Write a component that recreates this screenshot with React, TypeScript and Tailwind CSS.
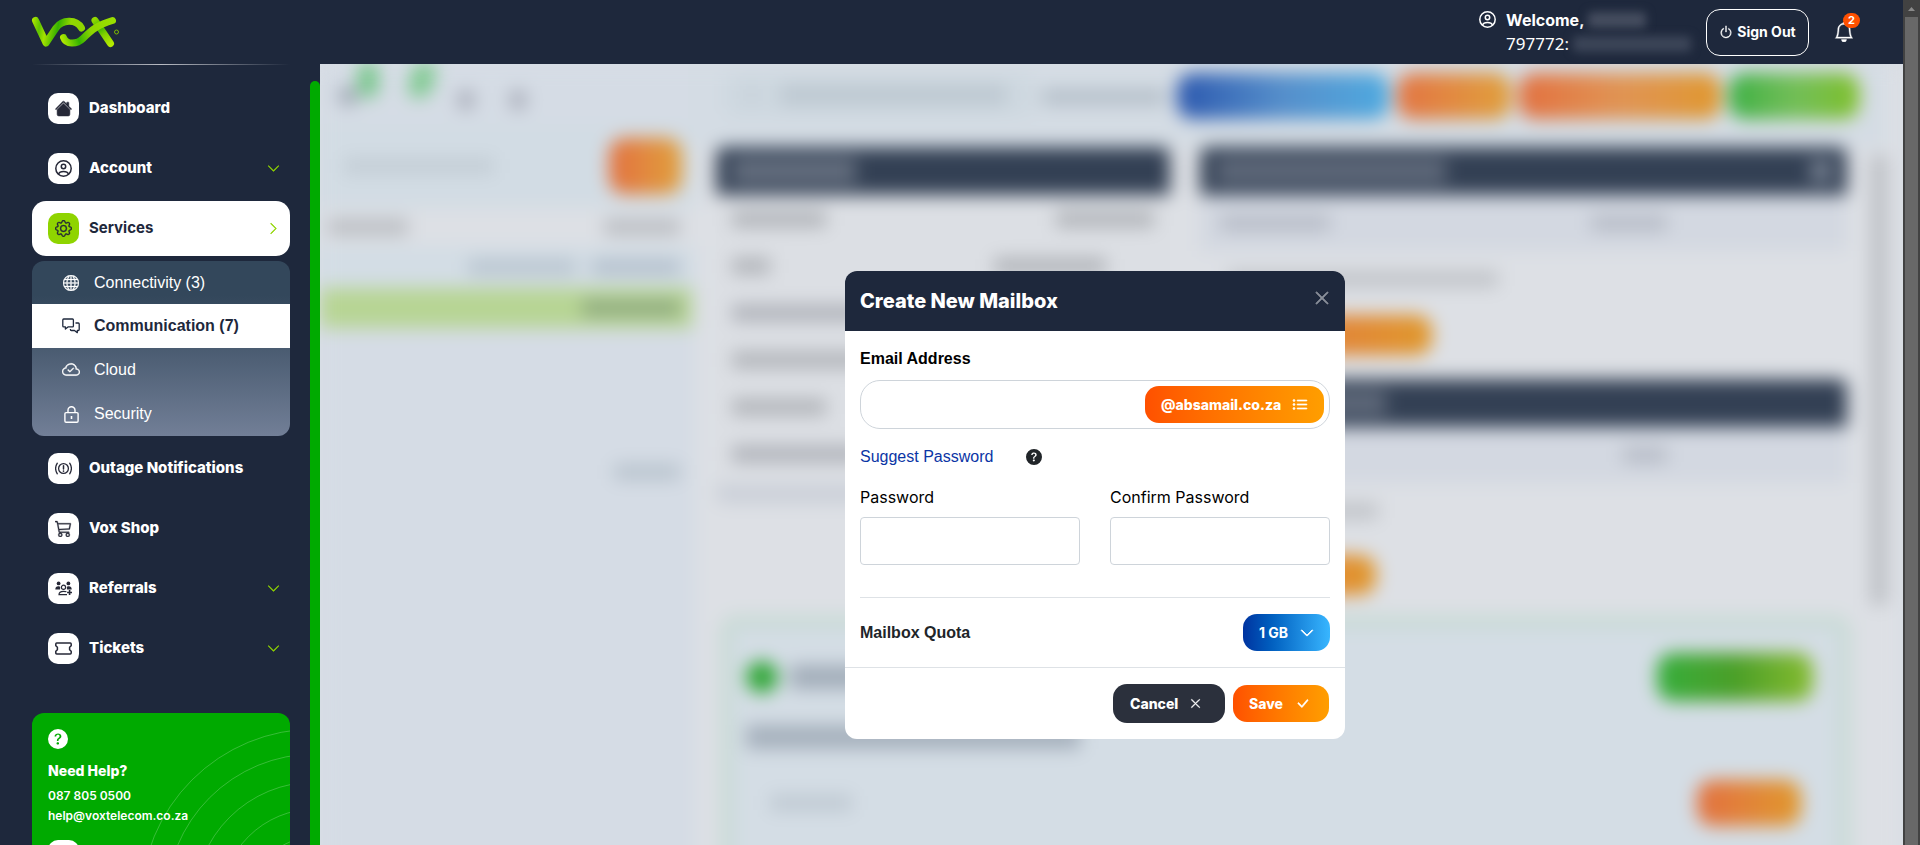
import type { ReactNode } from "react";
import {
  BsBell,
  BsCart3,
  BsCheckLg,
  BsChevronDown,
  BsChevronRight,
  BsCloudCheck,
  BsGear,
  BsGlobe,
  BsHouseFill,
  BsListUl,
  BsPower,
  BsQuestionCircleFill,
  BsXLg,
} from "react-icons/bs";

function VoxLogo() {
  return (
    <svg width="90" height="34" viewBox="30 16 90 34" fill="none" role="img" aria-label="Vox">
      <defs>
        <linearGradient id="vox-a" gradientUnits="userSpaceOnUse" x1="32" y1="20" x2="85" y2="30">
          <stop offset="0" stopColor="#b4ea00" />
          <stop offset="0.16" stopColor="#5fc400" />
          <stop offset="0.28" stopColor="#a4e200" />
          <stop offset="0.5" stopColor="#35b000" />
          <stop offset="0.72" stopColor="#93d800" />
          <stop offset="1" stopColor="#8fd600" />
        </linearGradient>
        <linearGradient id="vox-b" gradientUnits="userSpaceOnUse" x1="60" y1="42" x2="116" y2="22">
          <stop offset="0" stopColor="#c0f000" />
          <stop offset="0.3" stopColor="#35b400" />
          <stop offset="0.55" stopColor="#8ed600" />
          <stop offset="1" stopColor="#9be000" />
        </linearGradient>
        <linearGradient id="vox-c" gradientUnits="userSpaceOnUse" x1="95" y1="20" x2="111" y2="45">
          <stop offset="0" stopColor="#93d800" />
          <stop offset="0.35" stopColor="#3db600" />
          <stop offset="0.6" stopColor="#7fd000" />
          <stop offset="1" stopColor="#b4ea00" />
        </linearGradient>
      </defs>
      <g strokeWidth="7" strokeLinecap="round" strokeLinejoin="round">
        <path d="M95 21.500 L110.500 44.500" stroke="url(#vox-c)" />
        <path d="M35.500 21.500 L46 44 L56 29 C62 20.500 76 19.500 81.500 29" stroke="url(#vox-a)" />
        <path d="M63.500 38.500 C66 46 77 45.500 83 39.500 C92 30.500 98 26 112.500 21.500" stroke="url(#vox-b)" />
      </g>
      <circle cx="116.500" cy="33" r="2" stroke="#7cb800" strokeWidth="1" />
    </svg>
  );
}

function AccountIcon({ className }: { className?: string }) {
  return (
    <svg viewBox="0 0 17 17" className={className} fill="none" stroke="currentColor" strokeWidth="1.500">
      <circle cx="8.500" cy="8.500" r="7.700" />
      <circle cx="8.500" cy="6.500" r="2.200" />
      <path d="M3.500 14.200 C4.300 12 5.800 11.600 8.500 11.600 S12.700 12 13.500 14.200" />
    </svg>
  );
}

function ChatIcon() {
  return (
    <svg width="18" height="16" viewBox="0 0 18 16" fill="none" stroke="currentColor" strokeWidth="1.300" strokeLinejoin="round">
      <path d="M1.700 1 H10.500 Q11.400 1 11.400 1.900 V8 Q11.400 8.900 10.500 8.900 H6 L3.400 11 V8.900 H1.700 Q0.800 8.900 0.800 8 V1.900 Q0.800 1 1.700 1 Z" />
      <path d="M13.500 5 H16.300 Q17.200 5 17.200 5.900 V11.600 Q17.200 12.500 16.300 12.500 H15.300 V14.700 L12.500 12.500 H9.300 Q8.400 12.500 8.400 11.600 V11" />
    </svg>
  );
}

function LockIcon() {
  return (
    <svg width="15" height="17" viewBox="0 0 15 17" fill="none" stroke="currentColor" strokeWidth="1.400">
      <rect x="0.900" y="6.600" width="13.200" height="9.600" rx="1.200" />
      <path d="M4 6.600 V4.200 a3.500 3.500 0 0 1 7 0 V6.600" />
      <path d="M7.500 10 V13" strokeWidth="1.600" />
    </svg>
  );
}

function OutageIcon() {
  return (
    <svg width="17" height="13" viewBox="0 0 17 13" fill="none" stroke="currentColor" strokeWidth="1.300" strokeLinecap="round">
      <circle cx="8.500" cy="6.500" r="4.900" />
      <path d="M8.500 3.800 V6.900" strokeWidth="1.500" />
      <path d="M8.500 9.100 V9.200" strokeWidth="1.600" />
      <path d="M2.300 1.200 C0.300 4.300 0.300 8.700 2.300 11.800" />
      <path d="M14.700 1.200 C16.700 4.300 16.700 8.700 14.700 11.800" />
    </svg>
  );
}

function ReferralsIcon() {
  return (
    <svg width="17" height="15" viewBox="0 0 17 15" fill="currentColor">
      <circle cx="3.600" cy="2.400" r="1.900" />
      <circle cx="13.400" cy="2.400" r="1.900" />
      <path d="M0.300 8.600 C0.300 6 1.500 5.200 3.200 5.200 C4.400 5.200 5 5.600 5.200 6.200 L5 8.600 Z" />
      <path d="M16.700 8.600 C16.700 6 15.500 5.200 13.800 5.200 C12.600 5.200 12 5.600 11.800 6.200 L12 8.600 Z" />
      <circle cx="8.500" cy="6.300" r="2.100" fill="none" stroke="currentColor" strokeWidth="1.200" />
      <path d="M12 13.700 H4 C4 11 5.500 10.300 8.500 10.300 C9.700 10.300 10.700 10.400 11.400 10.800" fill="none" stroke="currentColor" strokeWidth="1.200" />
      <path d="M14.600 9 V14 M12.100 11.500 H17" stroke="currentColor" strokeWidth="1.600" />
    </svg>
  );
}

function TicketIcon() {
  return (
    <svg width="17" height="13" viewBox="0 0 17 13" fill="none" stroke="currentColor" strokeWidth="1.500" strokeLinejoin="round">
      <path d="M1.700 1 H15.300 Q16.200 1 16.200 1.900 V3.800 L14.600 5.300 V7.700 L16.200 9.200 V11.100 Q16.200 12 15.300 12 H1.700 Q0.800 12 0.800 11.100 V9.200 L2.400 7.700 V5.300 L0.800 3.800 V1.900 Q0.800 1 1.700 1 Z" />
    </svg>
  );
}

interface NavItemProps {
  icon: ReactNode;
  label: string;
  expandable?: boolean;
  active?: boolean;
}

function NavItem({ icon, label, expandable, active }: NavItemProps) {
  return (
    <a
      href="#"
      className={
        active
          ? "flex h-[55px] items-center gap-[10px] rounded-[14px] bg-white pr-[10px] pl-4 text-[#1e283c]"
          : "flex h-[55px] items-center gap-[10px] pr-[10px] pl-4 text-white"
      }
    >
      <span
        className={
          active
            ? "flex size-[31px] items-center justify-center rounded-[10px] bg-[#8fd400] text-[#262837]"
            : "flex size-[31px] items-center justify-center rounded-[10px] bg-white text-[#262837]"
        }
      >
        {icon}
      </span>
      <span className={active ? "flex-1 text-[15px] font-bold" : "flex-1 text-[15px] font-extrabold"}>{label}</span>
      {expandable && <BsChevronDown className="size-[13px] stroke-[0.7] text-[#8fd400]" />}
      {active && <BsChevronRight className="size-[13px] stroke-[0.7] text-[#8fd400]" />}
    </a>
  );
}

function SubItem({ icon, label, active }: NavItemProps) {
  return (
    <a
      href="#"
      className={
        active
          ? "flex items-center bg-white pl-[30px] font-['Liberation_Sans',sans-serif] text-base font-bold text-[#1e283c]"
          : "flex items-center pl-[30px] font-['Liberation_Sans',sans-serif] text-base text-white"
      }
    >
      <span className="mr-[14px] flex w-[18px] justify-center">{icon}</span>
      {label}
    </a>
  );
}

function Sidebar() {
  return (
    <aside className="w-[310px] shrink-0 overflow-hidden pr-5 pl-8">
      <div className="h-px bg-linear-to-r from-transparent via-[#b9bcc4] to-transparent" />
      <nav aria-label="Main" className="mt-4 flex flex-col gap-[5px]">
        <NavItem icon={<BsHouseFill className="size-[17px] stroke-[0.5]" />} label="Dashboard" />
        <NavItem icon={<AccountIcon className="size-[17px]" />} label="Account" expandable />
        <NavItem icon={<BsGear className="size-[17px] stroke-[0.3]" />} label="Services" active />
        <div className="grid grid-rows-[43px_44px_44px_44px] overflow-hidden rounded-xl bg-linear-to-b from-[#33475b] from-20% to-[#727f97]">
          <SubItem icon={<BsGlobe className="size-4 stroke-[0.3]" />} label="Connectivity (3)" />
          <SubItem icon={<ChatIcon />} label="Communication (7)" active />
          <SubItem icon={<BsCloudCheck className="size-[18px] stroke-[0.3]" />} label="Cloud" />
          <SubItem icon={<LockIcon />} label="Security" />
        </div>
        <NavItem icon={<OutageIcon />} label="Outage Notifications" />
        <NavItem icon={<BsCart3 className="size-[17px] stroke-[0.3]" />} label="Vox Shop" />
        <NavItem icon={<ReferralsIcon />} label="Referrals" expandable />
        <NavItem icon={<TicketIcon />} label="Tickets" expandable />
      </nav>
      <section className="relative mt-[37px] h-[260px] overflow-hidden rounded-xl bg-[#00aa00] p-4 text-white">
        <svg className="absolute top-0 right-0" width="160" height="260" viewBox="0 0 160 260" fill="none" stroke="#ffffff" strokeOpacity="0.220">
          <circle cx="185" cy="190" r="174" />
          <circle cx="185" cy="190" r="149" />
          <circle cx="185" cy="190" r="121" />
          <circle cx="185" cy="190" r="94" />
          <circle cx="185" cy="190" r="66" />
        </svg>
        <div className="relative">
          <BsQuestionCircleFill className="size-5" />
          <h2 className="mt-3 text-sm leading-5 font-extrabold">Need Help?</h2>
          <p className="mt-[5px] text-xs leading-5 font-semibold">087 805 0500</p>
          <p className="text-xs leading-5 font-semibold">
            <a href="mailto:help@voxtelecom.co.za">help@voxtelecom.co.za</a>
          </p>
          <div className="mt-[14px] size-[31px] rounded-[10px] bg-white" />
        </div>
      </section>
    </aside>
  );
}

function Header() {
  return (
    <header className="flex h-16 shrink-0 items-center pr-12 pl-[30px] text-white">
      <VoxLogo />
      <div className="ml-auto flex items-start">
        <AccountIcon className="mt-[3px] size-[17px]" />
        <div className="ml-[10px]">
          <div className="flex h-6 items-center text-base font-bold">
            Welcome,
            <span className="ml-1 h-4 w-[58px] rounded bg-[#454d5f] blur-[5px]" />
          </div>
          <div className="flex h-6 items-center font-['Noto_Sans',sans-serif] text-[17px]">
            797772:
            <span className="ml-1 h-4 w-[118px] rounded bg-[#3c4558] blur-[5px]" />
          </div>
        </div>
      </div>
      <button type="button" className="ml-[15px] flex h-[47px] w-[103px] items-center justify-center gap-1 rounded-[14px] border border-white text-sm font-bold">
        <BsPower className="size-[14px] stroke-[0.5]" />
        Sign Out
      </button>
      <button type="button" aria-label="Notifications" className="relative ml-6 p-px">
        <BsBell className="size-5 stroke-[0.3]" />
        <span className="absolute -top-[8px] left-[10px] flex h-[15px] w-[17px] items-center justify-center rounded-full bg-[#ff5000] text-[11px] font-bold">
          2
        </span>
      </button>
    </header>
  );
}

const HEADER_BAR = "flex h-[48px] items-center rounded-t-lg bg-[#334054] px-4";

function DetailRow({ label, value }: { label: string; value?: string }) {
  return (
    <div className="flex h-[47px] items-center justify-between px-4">
      <span className={label} />
      {value && <span className={value} />}
    </div>
  );
}

function Backdrop() {
  return (
    <div aria-hidden="true" className="flex min-h-[800px] blur-[9px]">
      <div className="w-[376px] shrink-0 bg-[#d5dce5]">
        <div className="flex h-[60px] items-start pt-[22px] pl-[18px]">
          <span className="size-5 rounded-full bg-[#a0a8b4]" />
          <span className="-mt-6 h-9 w-5 rounded-full bg-[#74c687]" />
          <span className="-mt-6 ml-8 h-9 w-6 -skew-x-12 rounded-full bg-[#7fca90]" />
          <span className="mt-1 ml-6 h-5 w-4 rounded-full bg-[#a6aab6]" />
          <span className="mt-1 ml-9 h-5 w-4 rounded-full bg-[#a6aab6]" />
        </div>
        <div className="flex h-[84px] items-center justify-between bg-[#d2dce4] pr-[14px] pl-6">
          <span className="h-4 w-[150px] bg-[#c3cdd5]" />
          <span className="h-[56px] w-[73px] rounded-2xl bg-linear-to-r from-[#e27040] to-[#e0a03c]" />
        </div>
        <div className="flex h-[38px] items-center justify-between bg-[#dde0e5] pr-4 pl-2">
          <span className="h-4 w-[80px] bg-[#babdc2]" />
          <span className="h-4 w-[76px] bg-[#babdc2]" />
        </div>
        <div className="flex h-[42px] items-center justify-end gap-4 bg-[#d3dde5] pr-4">
          <span className="h-4 w-[108px] bg-[#b9c5d0]" />
          <span className="h-4 w-[88px] bg-[#b4c0cd]" />
        </div>
        <div className="mr-1 flex h-[40px] items-center justify-end bg-[#b7d594] pr-3">
          <span className="h-4 w-[98px] bg-[#8faa80]" />
        </div>
        <div className="mt-[136px] flex justify-end pr-4">
          <span className="h-4 w-[66px] bg-[#b9c4ce]" />
        </div>
      </div>
      <div className="flex min-w-0 flex-1 flex-col bg-[#dde0e5] pr-4">
        <div className="-ml-2 flex h-[83px] items-start bg-[#d4dce4] pt-[9px] pr-7">
          <div className="ml-9 flex h-11 w-[310px] items-center gap-6 rounded-xl bg-[#ced8e0] pl-6">
            <span className="h-4 w-2 bg-[#c2ccd5]" />
            <span className="h-5 w-[226px] bg-[#bdc8d1]" />
          </div>
          <span className="mt-4 mr-3 ml-2 h-4 flex-1 bg-[#b5bfc9]" />
          <span className="h-[46px] w-[212px] rounded-2xl bg-linear-to-r from-[#2d58ae] via-[#568fcb] to-[#4eaae0]" />
          <span className="ml-2 h-[46px] w-[114px] rounded-2xl bg-linear-to-r from-[#e27444] to-[#e0a03c]" />
          <span className="ml-2 h-[46px] w-[202px] rounded-2xl bg-linear-to-r from-[#e27040] via-[#e09454] to-[#e0982c]" />
          <span className="ml-2 h-[46px] w-[130px] rounded-2xl bg-linear-to-r from-[#38b044] via-[#72be58] to-[#7fc024]" />
        </div>
        <div className="flex pl-5">
          <div className="h-[356px] w-[454px] shrink-0 rounded-lg bg-[#dcdfe4]">
            <div className={HEADER_BAR}>
              <span className="h-6 w-[124px] bg-[#667080]" />
            </div>
            <DetailRow label="h-4 w-[94px] bg-[#b0b3b8]" value="h-4 w-[98px] bg-[#b0b3b8]" />
            <DetailRow label="h-4 w-[38px] bg-[#b0b3b8]" value="mr-12 h-4 w-[112px] bg-[#b0b3b8]" />
            <DetailRow label="h-4 w-[130px] bg-[#aeb1b8]" />
            <DetailRow label="h-4 w-[140px] bg-[#b0b3b8]" />
            <DetailRow label="h-4 w-[94px] bg-[#b0b3b8]" />
            <DetailRow label="h-4 w-[130px] bg-[#aeb1b8]" />
            <div className="mt-2 h-[18px] rounded-b-lg bg-[#cacfd8]" />
          </div>
          <div className="ml-[30px] flex-1">
            <div className={HEADER_BAR}>
              <span className="h-6 w-[230px] bg-[#606a7b]" />
              <span className="ml-auto size-5 bg-[#7d8797]" />
            </div>
            <div className="flex h-[56px] items-center bg-[#d3d8e1] px-5">
              <span className="h-4 w-[110px] bg-[#b7bcc7]" />
              <span className="mr-40 ml-auto h-4 w-[76px] bg-[#b7bcc7]" />
            </div>
            <div className="flex h-[128px] flex-col gap-7 pt-5 pl-7">
              <span className="h-4 w-[270px] bg-[#c0c3c8]" />
              <span className="h-10 w-[204px] rounded-2xl bg-linear-to-r from-[#e27040] to-[#e0982c]" />
            </div>
            <div className={HEADER_BAR}>
              <span className="h-6 w-[170px] bg-[#606a7b]" />
            </div>
            <div className="flex h-[56px] items-center bg-[#d3d8e1] px-5">
              <span className="mr-40 ml-auto h-4 w-[44px] bg-[#b7bcc7]" />
            </div>
            <div className="flex h-[132px] flex-col gap-9 pt-5 pl-7">
              <span className="h-4 w-[150px] bg-[#c0c3c8]" />
              <span className="h-10 w-[148px] rounded-2xl bg-linear-to-r from-[#e27040] to-[#e0982c]" />
            </div>
          </div>
          <span className="mt-2 ml-6 h-[450px] w-4 bg-[#bcbfc4]" />
        </div>
        <div className="mr-9 ml-6 min-h-[260px] flex-1 rounded-2xl border-[14px] border-[#c9dbd6] bg-[#d4dde5] pt-6 pr-6 pl-3">
          <div className="flex items-center gap-3">
            <span className="size-8 rounded-full bg-[#2fa636]" />
            <span className="h-6 w-[100px] bg-[#a2adb9]" />
            <span className="ml-auto h-[48px] w-[156px] rounded-2xl bg-linear-to-r from-[#34ae3c] via-[#4a9f28] to-[#86bc30]" />
          </div>
          <div className="mt-6 h-6 w-[334px] bg-[#a5b0bc]" />
          <div className="mt-6 flex h-[60px] items-center justify-between pr-3 pl-6">
            <span className="h-4 w-[82px] bg-[#bfc9d2]" />
            <span className="h-[46px] w-[104px] rounded-2xl bg-linear-to-r from-[#e27040] to-[#e0982c]" />
          </div>
        </div>
      </div>
    </div>
  );
}

const PASSWORD_INPUT = "mt-2 h-12 w-full rounded border border-[#ced4da] bg-white px-3 text-base";

function MailboxDialog() {
  return (
    <form role="dialog" aria-labelledby="dialog-title" className="w-[500px] overflow-hidden rounded-xl bg-white text-[#212529]">
      <div className="flex h-[60px] items-center justify-between bg-[#1e283c] px-[15px] text-white">
        <h1 id="dialog-title" className="text-xl font-extrabold">
          Create New Mailbox
        </h1>
        <button type="button" aria-label="Close" className="mb-[6px] text-[#8f949e]">
          <BsXLg className="size-4 stroke-1" />
        </button>
      </div>
      <div className="px-[15px] pt-4">
        <label htmlFor="email" className="block font-['Liberation_Sans',sans-serif] text-base font-bold text-black">
          Email Address
        </label>
        <div className="mt-[9px] flex h-[49px] items-center rounded-[20px] border border-[#ced4da] pr-[5px]">
          <input id="email" type="text" className="h-full min-w-0 flex-1 rounded-[20px] px-4 text-base outline-none" />
          <button
            type="button"
            aria-haspopup="listbox"
            className="flex h-[37px] w-[179px] items-center justify-between rounded-[14px] bg-linear-to-r from-[#ff5000] to-[#ff9e00] px-4 text-sm font-extrabold text-white"
          >
            @absamail.co.za
            <BsListUl className="size-4 stroke-[0.7]" />
          </button>
        </div>
        <div className="mt-4 flex h-6 items-center">
          <a href="#" className="font-['Liberation_Sans',sans-serif] text-base text-[#0b35a5]">
            Suggest Password
          </a>
          <BsQuestionCircleFill className="ml-[33px] size-4" />
        </div>
        <div className="mt-4 grid grid-cols-2 gap-[30px] text-black">
          <div>
            <label htmlFor="password" className="block text-base leading-6">
              Password
            </label>
            <input id="password" type="password" className={PASSWORD_INPUT} />
          </div>
          <div>
            <label htmlFor="confirm" className="block text-base leading-6">
              Confirm Password
            </label>
            <input id="confirm" type="password" className={PASSWORD_INPUT} />
          </div>
        </div>
        <div className="mt-8 flex h-[70px] items-center justify-between border-t border-[#dee2e6]">
          <label htmlFor="quota" className="font-['Liberation_Sans',sans-serif] text-base font-bold">
            Mailbox Quota
          </label>
          <div className="relative">
            <select
              id="quota"
              className="h-[37px] w-[87px] appearance-none rounded-[14px] bg-linear-to-r from-[#0033a0] to-[#38b6ff] pl-4 text-sm font-bold text-white"
            >
              <option>1 GB</option>
            </select>
            <BsChevronDown className="pointer-events-none absolute top-3 right-4 size-[14px] stroke-1 text-white" />
          </div>
        </div>
      </div>
      <div className="flex h-[72px] items-center justify-end gap-2 border-t border-[#dee2e6] px-4 text-sm font-extrabold text-white">
        <button type="button" className="flex h-[39px] w-28 items-center gap-3 rounded-[14px] bg-[#2b303c] pl-[17px]">
          Cancel
          <BsXLg className="size-[11px] stroke-1" />
        </button>
        <button type="submit" className="flex h-[37px] w-24 items-center gap-3 rounded-[14px] bg-linear-to-r from-[#ff5000] to-[#ff9e00] pl-4">
          Save
          <BsCheckLg className="size-[15px] stroke-[0.5]" />
        </button>
      </div>
    </form>
  );
}

export default function App() {
  return (
    <div className="flex h-screen overflow-hidden bg-[#1e283c] font-[Inter,sans-serif]">
      <div className="flex min-w-0 flex-1 flex-col">
        <Header />
        <div className="flex min-h-0 flex-1">
          <Sidebar />
          <div className="mt-[17px] w-[10px] shrink-0 rounded-t-[5px] bg-[#00aa00]" />
          <main className="relative min-w-0 flex-1 overflow-hidden bg-[#d8dde4]">
            <Backdrop />
            <div className="absolute inset-0 flex items-start justify-center pt-[207px] pr-[33px]">
              <MailboxDialog />
            </div>
          </main>
        </div>
      </div>
      <div aria-hidden="true" className="flex w-[17px] shrink-0 flex-col items-center bg-[#424242]">
        <svg width="17" height="17" viewBox="0 0 17 17">
          <path d="M5 11 L8.500 7 L12 11 Z" fill="#8a8a8a" />
        </svg>
        <div className="w-[13px] flex-1 bg-[#686868]" />
      </div>
    </div>
  );
}
